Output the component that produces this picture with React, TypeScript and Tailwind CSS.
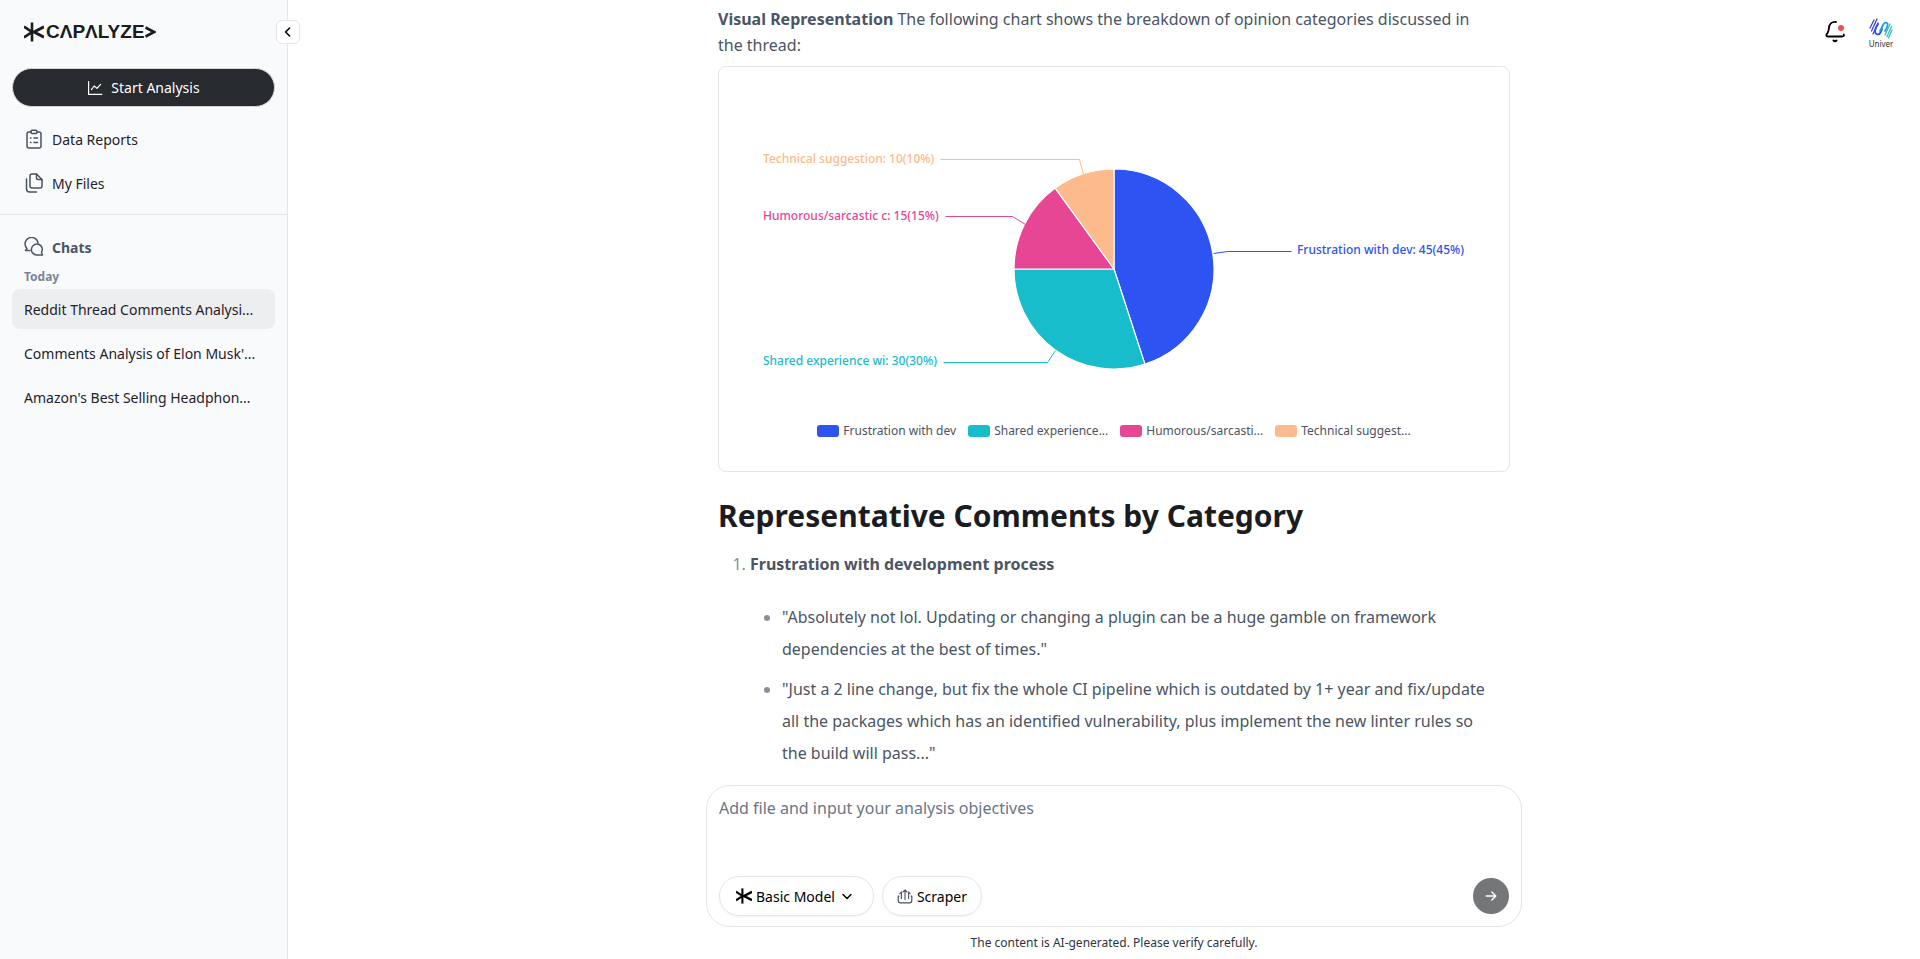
import type { ReactNode } from "react";

const slices = [
  { name: "Frustration with dev", legend: "Frustration with dev", value: 45, color: "#2d53f2", tx: 578, ty: 187, line: "494,186 508,184 572,184" },
  { name: "Shared experience wi", legend: "Shared experience...", value: 30, color: "#17bdcb", tx: 44, ty: 298, line: "336,283 328,295 224,295" },
  { name: "Humorous/sarcastic c", legend: "Humorous/sarcasti...", value: 15, color: "#e74694", tx: 44, ty: 153, line: "306,157 293,149 226,149" },
  { name: "Technical suggestion", legend: "Technical suggest...", value: 10, color: "#fdba8c", tx: 44, ty: 96, line: "364,107 360,92 221,92" },
];

const CX = 395;
const CY = 202;
const R = 100;

function slicePath(start: number, value: number) {
  const a0 = (start / 100) * 2 * Math.PI;
  const a1 = ((start + value) / 100) * 2 * Math.PI;
  const large = value > 50 ? 1 : 0;
  return `M${CX} ${CY}L${CX + R * Math.sin(a0)} ${CY - R * Math.cos(a0)}A${R} ${R} 0 ${large} 1 ${CX + R * Math.sin(a1)} ${CY - R * Math.cos(a1)}Z`;
}

function PieChart() {
  let start = 0;
  return (
    <figure className="rounded-lg border border-[#e3e5ea] pb-8">
      <svg viewBox="0 0 790 340" className="block w-full" role="img" aria-label="Breakdown of opinion categories">
        {slices.map((s) => {
          const d = slicePath(start, s.value);
          start += s.value;
          return (
            <g key={s.name}>
              <path d={d} fill={s.color} stroke="#fff" strokeWidth="1.2" strokeLinejoin="bevel" />
              <polyline points={s.line} fill="none" stroke={s.color} strokeWidth="1" transform="translate(0.5 0.5)" />
              <text x={s.tx} y={s.ty} fill={s.color} className="text-xs font-medium">
                {`${s.name}: ${s.value}(${s.value}%)`}
              </text>
            </g>
          );
        })}
      </svg>
      <figcaption className="flex h-8 items-center justify-center gap-3 pt-4 text-xs text-[#4d5263]">
        {slices.map((s) => (
          <span key={s.name} className="flex items-center gap-1">
            <svg width="22" height="12" aria-hidden="true">
              <rect width="22" height="12" rx="3" fill={s.color} />
            </svg>
            {s.legend}
          </span>
        ))}
      </figcaption>
    </figure>
  );
}

function Spark({ className }: { className: string }) {
  return (
    <svg viewBox="0 0 20 20" className={className} fill="none" stroke="currentColor" aria-hidden="true">
      <path d="M8 0.5V19.5" strokeWidth="2.6" />
      <path d="M0 4.6L8 10L0 15.4" strokeWidth="2.6" />
      <path d="M20 4.8L10 10L20 15.2" strokeWidth="3" />
    </svg>
  );
}

function Logo() {
  return (
    <a href="#" aria-label="Capalyze" className="flex h-5 items-center text-[#1b1c1f]">
      <Spark className="size-5" />
      <span className="pl-0.5 font-['Liberation_Sans',sans-serif] text-[19px] leading-5 font-bold">CΛPΛLYZE</span>
      <svg viewBox="0 0 11 12" className="h-3 w-[11px]" fill="none" stroke="currentColor" strokeWidth="2.8" aria-hidden="true">
        <path d="M0.5 1.5L9 6L0.5 10.5" />
      </svg>
    </a>
  );
}

function Stroke({ children, className }: { children: ReactNode; className: string }) {
  return (
    <svg viewBox="0 0 20 20" className={className} fill="none" stroke="currentColor" strokeWidth="1.5" strokeLinecap="round" strokeLinejoin="round" aria-hidden="true">
      {children}
    </svg>
  );
}

const chats = ["Reddit Thread Comments Analysi...", "Comments Analysis of Elon Musk'...", "Amazon's Best Selling Headphon..."];

function Sidebar() {
  return (
    <aside className="relative flex w-72 shrink-0 flex-col border-r border-[#e3e5ea] bg-[#f9fafc]">
      <div className="px-6 pt-[22px]">
        <Logo />
      </div>
      <button type="button" aria-label="Collapse sidebar" className="absolute top-5 -right-[13px] flex size-6 items-center justify-center rounded-md border border-[#e3e5ea] bg-white text-black">
        <Stroke className="size-4">
          <path d="M12 5L7 10L12 15" strokeWidth="2" />
        </Stroke>
      </button>
      <div className="px-3 pt-[26px]">
        <button type="button" className="flex h-[39px] w-full items-center justify-center gap-2 rounded-full border border-[#d5d7dc] bg-[#272a2f] text-[14px] text-white">
          <Stroke className="size-4">
            <path d="M2 2V18H18.5" />
            <path d="M5.5 12L9 7.5L12.5 10.5L17 5.5" />
          </Stroke>
          Start Analysis
        </button>
      </div>
      <nav className="flex flex-col px-6 pt-[10px] pb-[9px] text-[14px] text-[#1f2229]">
        <a href="#" className="flex h-11 items-center gap-2">
          <Stroke className="size-5 text-[#4b5263]">
            <path d="M7 3H5A2 2 0 0 0 3 5V17A2 2 0 0 0 5 19H15A2 2 0 0 0 17 17V5A2 2 0 0 0 15 3H13" />
            <rect x="7" y="1.2" width="6" height="3.2" rx="1" />
            <path d="M6.5 9H7M10 9H13.5M6.5 13.5H7M10 13.5H13.5" />
          </Stroke>
          Data Reports
        </a>
        <a href="#" className="flex h-11 items-center gap-2">
          <Stroke className="size-5 text-[#4b5263]">
            <path d="M12.5 1H8A2 2 0 0 0 6 3V13A2 2 0 0 0 8 15H16A2 2 0 0 0 18 13V6.5Z" />
            <path d="M12.5 1V5A1.5 1.5 0 0 0 14 6.5H18" />
            <path d="M2.5 6V16A3 3 0 0 0 5.5 19H12.5" />
          </Stroke>
          My Files
        </a>
      </nav>
      <section className="border-t border-[#e3e5ea] px-3 pt-5 text-[14px] text-[#1f2229]">
        <h2 className="flex h-6 items-center gap-2 px-3 font-bold text-[#4b5563]">
          <Stroke className="size-5">
            <path d="M6 13.5H1.5L3 11.5A6.5 6.5 0 1 1 14 6" />
            <path d="M18.5 18H12.5A5.5 5.5 0 1 1 17.5 15.5Z" />
          </Stroke>
          Chats
        </h2>
        <h3 className="px-3 pt-1.5 text-[12px] leading-6 font-bold text-[#7c8598]">Today</h3>
        <ul className="flex flex-col gap-1">
          {chats.map((c, i) => (
            <li key={c}>
              <a href="#" className={i === 0 ? "flex h-10 items-center rounded-lg bg-[#edeef0] px-3 whitespace-nowrap" : "flex h-10 items-center rounded-lg px-3 whitespace-nowrap"}>
                {c}
              </a>
            </li>
          ))}
        </ul>
      </section>
    </aside>
  );
}

function Composer() {
  return (
    <form className="flex w-full flex-col rounded-[24px] border border-[#e3e5ea] bg-white px-3 pt-[6px] pb-[10px]">
      <textarea aria-label="Analysis objectives" placeholder="Add file and input your analysis objectives" className="h-[84px] resize-none text-[16px] leading-8 outline-none placeholder:text-[#6b7588]" />
      <div className="flex items-center gap-2">
        <button type="button" className="flex h-10 items-center gap-1 rounded-full border border-[#e3e5ea] pr-[18px] pl-4 text-[14px] text-black shadow-xs">
          <Spark className="size-4" />
          Basic Model
          <Stroke className="size-4">
            <path d="M5 8L10 13L15 8" strokeWidth="1.8" />
          </Stroke>
        </button>
        <button type="button" className="flex h-10 items-center gap-1 rounded-full border border-[#e3e5ea] px-[14px] text-[14px] text-black shadow-xs">
          <Stroke className="size-4 text-[#4b5263]">
            <path d="M2.5 10H1.5V15.5A3 3 0 0 0 4.5 18.500H15.5A3 3 0 0 0 18.5 15.5V10H17.5" />
            <path d="M10 14.500V3.500M7.500 5L10 2.500L12.500 5M5.500 13V6M3.500 7L5.500 5M14.500 13V6M16.500 7L14.500 5" strokeWidth="1.400" />
          </Stroke>
          Scraper
        </button>
        <button type="submit" aria-label="Send" className="ml-auto flex size-9 items-center justify-center rounded-full bg-[#757677] text-white">
          <Stroke className="size-4">
            <path d="M4 10H16M11 5L16 10L11 15" strokeWidth="1.8" />
          </Stroke>
        </button>
      </div>
    </form>
  );
}

function UserBar() {
  return (
    <div className="absolute top-4 right-[27px] flex items-start gap-[22px]">
      <button type="button" aria-label="Notifications" className="text-black">
        <svg viewBox="0 0 24 28" className="block h-7 w-6" fill="none" stroke="currentColor" strokeWidth="1.8" strokeLinecap="round" aria-hidden="true">
          <path d="M13 6C9 5.5 6.5 8 6 11.5L5.5 14.5Q5 16.5 3.8 18Q2.5 20.5 5 20.5H19Q21.5 20.5 20.8 18.5" />
          <path d="M10.5 24.5Q12 26 13.5 24.5" strokeWidth="2" />
          <circle cx="18" cy="12" r="3" fill="#f05252" stroke="none" />
        </svg>
      </button>
      <a href="#" aria-label="Univer account" className="flex w-6 flex-col items-center">
        <svg viewBox="0 0 24 20" className="h-6 w-6" fill="none" strokeLinecap="round" aria-hidden="true">
          <path d="M1 10L5 2M2.5 13L8 1M4 16L9 5" stroke="#3b3fe0" strokeWidth="1.3" />
          <path d="M9 6Q4 14 7.5 16T13 11" stroke="#2a4df0" strokeWidth="1.8" />
          <path d="M11 13L14 7Q16 3.5 18 5T16 13" stroke="#1f9be8" strokeWidth="1.8" />
          <path d="M16 17L21 6M18 18.5L22.5 8.5M19.5 20L23 12" stroke="#2fc0b4" strokeWidth="1.3" />
        </svg>
        <span className="text-[8px] leading-2 text-[#333]">Univer</span>
      </a>
    </div>
  );
}

export default function App() {
  return (
    <div className="flex h-screen overflow-hidden bg-white font-['Noto_Sans','Open_Sans',sans-serif]">
      <Sidebar />
      <main className="relative flex min-w-0 flex-1 flex-col items-center pl-5">
        <UserBar />
        <article className="min-h-0 w-full max-w-[792px] flex-1 overflow-hidden pt-[6px] text-[16px] text-[#4b5563]">
          <p className="pb-2 leading-[26px]">
            <strong>Visual Representation</strong> The following chart shows the breakdown of opinion categories discussed in
            <br />
            the thread:
          </p>
          <PieChart />
          <h1 className="pt-6 text-[30px] leading-10 font-bold text-[#1b1c1f]">Representative Comments by Category</h1>
          <ol className="list-decimal pt-3 pl-8 leading-8 marker:text-[#8b8f9a]">
            <li>
              <strong>Frustration with development process</strong>
              <ul className="flex list-disc flex-col gap-2 pt-[21px] pl-8 marker:text-[#8b8f9a]">
                <li>"Absolutely not lol. Updating or changing a plugin can be a huge gamble on framework dependencies at the best of times."</li>
                <li>
                  "Just a 2 line change, but fix the whole CI pipeline which is outdated by 1+ year and fix/update
                  <br />
                  all the packages which has an identified vulnerability, plus implement the new linter rules so
                  <br />
                  the build will pass..."
                </li>
              </ul>
            </li>
          </ol>
        </article>
        <div className="w-full max-w-[816px]">
          <Composer />
          <p className="py-2 text-center text-[12px] leading-4 text-[#2f3440]">The content is AI-generated. Please verify carefully.</p>
        </div>
      </main>
    </div>
  );
}
